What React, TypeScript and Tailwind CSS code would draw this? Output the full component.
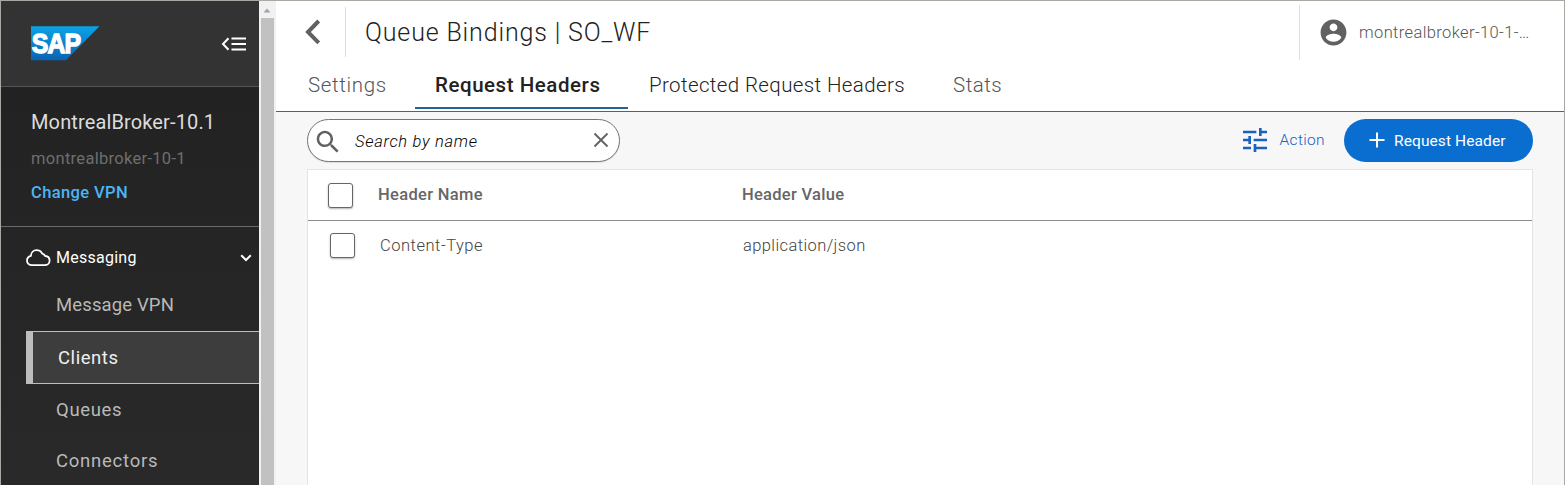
function SapLogo() {
  return (
    <svg width="69" height="35" viewBox="0 0 69 35" aria-label="SAP">
      <defs>
        <linearGradient id="sap" x1="0" y1="0" x2="0" y2="1">
          <stop offset="0" stopColor="#0ba3e4" />
          <stop offset="1" stopColor="#0b63b4" />
        </linearGradient>
      </defs>
      <path d="M0 0.3H68.5L35 34.2H0Z" fill="url(#sap)" />
      <text
        x="0.8"
        y="27"
        textLength="48.5"
        lengthAdjust="spacingAndGlyphs"
        fill="#fff"
        stroke="#fff"
        strokeWidth="1.4"
        className="font-['Liberation_Sans',sans-serif] text-[28px] font-bold tracking-[-1px]"
      >
        SAP
      </text>
    </svg>
  );
}

function CollapseIcon() {
  return (
    <svg width="26" height="16" viewBox="0 0 26 16" fill="none" stroke="#fff" strokeWidth="2">
      <path d="M7.500 2.200 2 8l5.500 5.800" />
      <path d="M10.500 2.500H25M10.500 8H25M10.500 13.500H25" strokeWidth="1.800" />
    </svg>
  );
}

function CloudIcon() {
  return (
    <svg width="26" height="18" viewBox="0 0 26 18" fill="none" stroke="#fff" strokeWidth="1.8" strokeLinejoin="round">
      <path d="M6 16.200H18.600C21.500 16.200 23.600 14.200 23.600 11.700C23.600 9 21.600 7.200 19.200 7C18.500 5.700 17.400 5 16.200 4.700C15.200 2.500 13 1.200 10.600 1.200C7.400 1.200 5 3.600 4.900 6.900C2.600 7.500 1 9.300 1 11.600C1 14.200 3.200 16.200 6 16.200Z" />
    </svg>
  );
}

function MaterialIcon({ d, className }: { d: string; className: string }) {
  return (
    <svg viewBox="0 0 24 24" fill="currentColor" className={className}>
      <path d={d} />
    </svg>
  );
}

const ACCOUNT =
  "M12 2C6.48 2 2 6.48 2 12s4.48 10 10 10 10-4.48 10-10S17.52 2 12 2zm0 3c1.66 0 3 1.340 3 3s-1.340 3-3 3-3-1.340-3-3 1.340-3 3-3zm0 14.200c-2.500 0-4.710-1.280-6-3.220.03-1.990 4-3.080 6-3.080 1.990 0 5.970 1.090 6 3.080-1.290 1.940-3.500 3.220-6 3.220z";
const SEARCH =
  "M15.500 14h-.79l-.28-.27C15.410 12.590 16 11.110 16 9.500 16 5.910 13.090 3 9.500 3S3 5.910 3 9.500 5.910 16 9.500 16c1.610 0 3.090-.59 4.230-1.570l.27.28v.79l5 4.990L20.490 19l-4.990-5zm-6 0C7.010 14 5 11.990 5 9.500S7.010 5 9.500 5 14 7.010 14 9.500 11.990 14 9.500 14z";
const TUNE =
  "M3 17v2h6v-2H3zM3 5v2h10V5H3zm10 16v-2h8v-2h-8v-2h-2v6h2zM7 9v2H3v2h4v2h2V9H7zm14 4v-2H11v2h10zm-6-4h2V7h4V5h-4V3h-2v6z";

function Sidebar() {
  return (
    <aside className="flex w-[258px] shrink-0 flex-col bg-linear-to-b from-[#212121] to-[#292929]">
      <div className="flex h-[86px] items-center justify-between border-b border-[#555] bg-[#333] pl-[30px] pr-3">
        <SapLogo />
        <CollapseIcon />
      </div>
      <div className="flex h-[140px] flex-col border-b border-[#6a6a6a] pl-[30px] pt-5">
        <div className="h-[30px] text-xl leading-[30px] tracking-[0.13px] text-[#dcdcdc]">MontrealBroker-10.1</div>
        <div className="mt-2.5 h-6 text-[16.5px] leading-6 tracking-[0.3px] text-[#6e6e6e]">montrealbroker-10-1</div>
        <div className="mt-2.5 h-6 text-[16.5px] leading-6 font-medium tracking-[0.38px] text-[#4cb4f5]">Change VPN</div>
      </div>
      <nav className="flex flex-col pl-[25px] text-[18.5px] text-[#b9b9b9]">
        <div className="flex h-[60px] items-center pt-px text-base text-white">
          <CloudIcon />
          <span className="ml-1 tracking-[0.25px]">Messaging</span>
          <svg width="12" height="8" viewBox="0 0 12 8" fill="none" stroke="currentColor" strokeWidth="2" className="ml-auto mr-[7px]">
            <path d="M1.200 1.300 6 6l4.800-4.700" />
          </svg>
        </div>
        <a className="h-[44px] pl-[30px] leading-[37px] tracking-[0.13px]">Message VPN</a>
        <a className="h-[53px] border-y border-l-[7px] border-[#bdbdbd] bg-[#3d3d3d] pl-[25px] leading-[53px] tracking-[0.55px] text-[#efefef]">
          Clients
        </a>
        <a className="h-[51px] pl-[30px] leading-[53px] tracking-[0.65px]">Queues</a>
        <a className="h-[50px] pl-[30px] leading-[53px] tracking-[0.75px]">Connectors</a>
      </nav>
    </aside>
  );
}

function Scrollbar() {
  return (
    <div className="flex w-[17px] shrink-0 flex-col items-center bg-[#f1f1f1] pr-px">
      <svg width="8" height="17" viewBox="0 0 8 17" fill="#a3a3a3">
        <path d="M0.500 11.500 4 7.500l3.500 4Z" />
      </svg>
      <div className="w-[13px] flex-1 bg-[#c1c1c1]" />
    </div>
  );
}

function Checkbox() {
  return <span className="block size-[25px] shrink-0 rounded-[3px] border border-[#666] bg-white shadow-[0_1px_2px_rgba(0,0,0,0.3)]" />;
}

export default function App() {
  return (
    <div className="flex h-[485px] w-[1565px] overflow-hidden border-x border-t border-[#a5aba3] bg-white font-[Roboto,sans-serif]">
      <Sidebar />
      <Scrollbar />
      <main className="flex min-w-0 flex-1 flex-col bg-[#f7f7f7]">
        <header className="flex h-[111px] flex-col border-b border-[#1f72a5] bg-white">
          <div className="flex h-[62px] shrink-0 items-start">
            <svg width="16" height="26" viewBox="0 0 16 26" fill="none" stroke="#616161" strokeWidth="4" className="ml-[29px] mt-[18px]">
              <path d="M13.700 2 3 13l10.700 10.800" />
            </svg>
            <div className="ml-6 mt-1.5 h-[50px] w-px bg-[#dedede]" />
            <h1 className="ml-[19px] mt-3.5 whitespace-nowrap text-[25px] leading-9 font-light tracking-[0.85px] text-[#222]">
              Queue Bindings | SO_WF
            </h1>
            <div className="ml-auto mt-1 flex h-[55px] w-[265px] items-center border-l border-[#e0e0e0] pl-[18px] text-[#616161]">
              <MaterialIcon d={ACCOUNT} className="size-[31px]" />
              <span className="ml-2.5 text-[16.5px] leading-6 font-light tracking-[0.38px] text-[#555]">montrealbroker-10-1-…</span>
            </div>
          </div>
          <div className="flex h-[46px] pl-8 text-[20.5px] font-light leading-[44px] whitespace-nowrap text-[#222]">
            <a className="w-[107px] tracking-[0.65px] text-[#555]">Settings</a>
            <a className="w-[213px] border-b-2 border-[#20639b] pl-5 font-medium tracking-[0.55px]">Request Headers</a>
            <a className="ml-[21px] w-[304px] tracking-[0.38px]">Protected Request Headers</a>
            <a className="tracking-[0.5px] text-[#555]">Stats</a>
          </div>
        </header>
        <div className="flex h-[57px] shrink-0 items-center pl-[31px] pr-[31px]">
          <div className="flex h-[43px] w-[313px] items-center rounded-full border border-[#757575] bg-white pl-[5px] pr-2.5 shadow-[0_1px_1px_rgba(0,0,0,0.1)]">
            <MaterialIcon d={SEARCH} className="mt-0.5 size-[30px] text-[#616161]" />
            <span className="ml-3 pt-0.5 text-[16.5px] leading-6 font-light italic tracking-[0.7px] text-black">Search by name</span>
            <svg width="16" height="16" viewBox="0 0 16 16" fill="none" stroke="#616161" strokeWidth="1.8" className="mb-0.5 ml-auto">
              <path d="M1.500 1.500 14.500 14.500M14.500 1.500 1.500 14.500" />
            </svg>
          </div>
          <div className="ml-auto flex items-center text-[15.5px] leading-6 font-light tracking-[0.35px] text-[#1a62bb]">
            <MaterialIcon d={TUNE} className="mb-0.5 size-[32px]" />
            <span className="mb-0.5 ml-[9px]">Action</span>
          </div>
          <button className="ml-[19px] flex h-[43px] w-[189px] items-center rounded-full bg-[#0a6ed1] pl-[25px] text-[15.5px] tracking-[0.1px] text-white">
            <svg width="16" height="16" viewBox="0 0 16 16" stroke="currentColor" strokeWidth="2" className="mb-px">
              <path d="M8 0.500V15.500M0.500 8H15.500" />
            </svg>
            <span className="ml-[9px] pt-0.5">Request Header</span>
          </button>
        </div>
        <section className="ml-[31px] mr-[31px] flex-1 border-x border-t border-[#e4e4e4] bg-white">
          <div className="flex h-[51px] items-center border-b border-[#8c8c8c] pl-5 text-[16.5px] leading-6 font-medium text-[#666]">
            <span className="pt-px">
              <Checkbox />
            </span>
            <span className="ml-[25px] w-[364px] tracking-[0.32px]">Header Name</span>
            <span className="tracking-[0.28px]">Header Value</span>
          </div>
          <div className="flex h-[49px] items-center pl-[22px] text-[16.5px] leading-6 font-light text-[#444]">
            <Checkbox />
            <span className="ml-[25px] w-[363px] tracking-[0.52px]">Content-Type</span>
            <span className="tracking-[0.4px]">application/json</span>
          </div>
        </section>
      </main>
    </div>
  );
}
